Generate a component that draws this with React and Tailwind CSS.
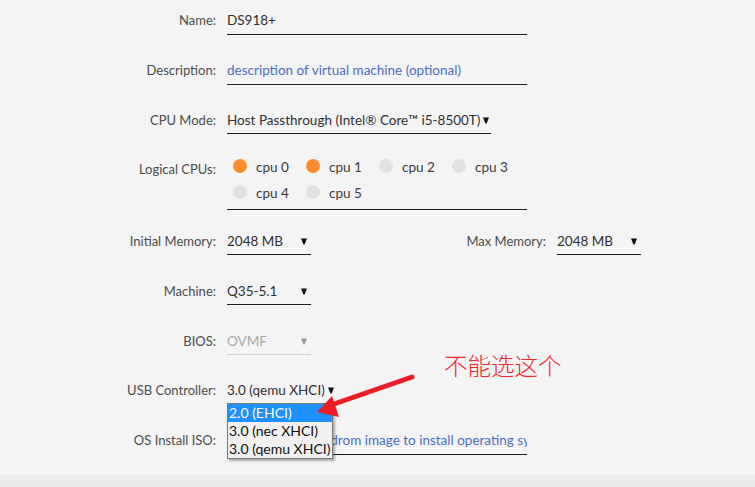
import React from 'react';

const font = { fontFamily: 'Lato, "Noto Sans", sans-serif' };

const Caret = ({ light }) => (
  <svg width="6" height="7" viewBox="0 0 6 7" className="shrink-0">
    <path d="M0 0.5 H6 L3.6 6.5 H2.4 Z" fill={light ? '#9a9a9a' : '#111'} />
  </svg>
);

const Label = ({ children, className = '' }) => (
  <div className={`w-[216px] shrink-0 text-right text-[13px] leading-[18px] text-[#4c4c4c] ${className}`}>
    {children}
  </div>
);

const TextField = ({ value, placeholder }) => (
  <div className="ml-[11px] w-[300px] overflow-hidden whitespace-nowrap border-b border-[#1e1e1e] pb-[5px] leading-[18px]">
    {value ? (
      <span className="text-[#303030]">{value}</span>
    ) : (
      <span className="text-[#4a6fc0]">{placeholder}</span>
    )}
  </div>
);

const SelectField = ({ value, width, light, auto }) => (
  <div
    className={`ml-[11px] flex items-center border-b pb-[4px] leading-[18px] ${
      light ? 'border-[#cfcfcf] text-[#a8a8a8]' : 'border-[#1e1e1e] text-[#303030]'
    } ${auto ? 'gap-[3px] pr-[2px]' : 'justify-between pr-[4px]'}`}
    style={width ? { width } : undefined}
  >
    <span className="whitespace-nowrap">{value}</span>
    <Caret light={light} />
  </div>
);

const cpus = [
  { name: 'cpu 0', on: true },
  { name: 'cpu 1', on: true },
  { name: 'cpu 2', on: false },
  { name: 'cpu 3', on: false },
  { name: 'cpu 4', on: false },
  { name: 'cpu 5', on: false },
];

export default function App() {
  return (
    <div className="relative w-[755px] h-[487px] overflow-hidden bg-[#ebebeb] text-[13.5px]" style={font}>
      <div className="h-[475px] bg-[#f4f4f4] pt-[11px]">
        {/* Name */}
        <div className="flex items-start">
          <Label>Name:</Label>
          <TextField value="DS918+" />
        </div>

        {/* Description */}
        <div className="mt-[26px] flex items-start">
          <Label>Description:</Label>
          <TextField placeholder="description of virtual machine (optional)" />
        </div>

        {/* CPU Mode */}
        <div className="mt-[26px] flex items-start">
          <Label>CPU Mode:</Label>
          <SelectField value="Host Passthrough (Intel® Core™ i5-8500T)" auto />
        </div>

        {/* Logical CPUs */}
        <div className="mt-[19px] flex items-start">
          <Label className="mt-[7px]">Logical CPUs:</Label>
          <div className="ml-[11px] w-[300px] border-b border-[#1e1e1e] pb-[4px]">
            <div className="grid grid-cols-[73px_73px_73px_73px]">
              {cpus.map((c) => (
                <div key={c.name} className="flex h-[26px] items-center pl-[6px]">
                  <span
                    className={`h-[14px] w-[14px] rounded-full ${c.on ? 'bg-[#fe8b2d]' : 'bg-[#e2e2e2]'}`}
                  />
                  <span className="ml-[9px] mt-[1px] leading-[18px] text-[#3a3a3a]">{c.name}</span>
                </div>
              ))}
            </div>
          </div>
        </div>

        {/* Memory */}
        <div className="mt-[22px] flex items-start">
          <Label>Initial Memory:</Label>
          <SelectField value="2048 MB" width="84px" />
          <div className="ml-auto mr-[114px] flex items-start">
            <div className="text-right text-[13px] leading-[18px] text-[#4c4c4c]">Max Memory:</div>
            <SelectField value="2048 MB" width="84px" />
          </div>
        </div>

        {/* Machine */}
        <div className="mt-[27px] flex items-start">
          <Label>Machine:</Label>
          <SelectField value="Q35-5.1" width="84px" />
        </div>

        {/* BIOS */}
        <div className="mt-[27px] flex items-start">
          <Label>BIOS:</Label>
          <SelectField value="OVMF" width="84px" light />
        </div>

        {/* USB Controller */}
        <div className="mt-[26px] flex items-start">
          <Label>USB Controller:</Label>
          <SelectField value="3.0 (qemu XHCI)" auto />
        </div>

        {/* OS Install ISO */}
        <div className="mt-[27px] flex items-start">
          <Label>OS Install ISO:</Label>
          <TextField placeholder="Click and Select cdrom image to install operating system" />
        </div>
      </div>

      {/* Open dropdown list */}
      <div className="absolute left-[227px] top-[403px] w-[106px] border border-[#7a7a7a] bg-[#f0f0f0] text-[14px] leading-[18px] text-[#111] shadow-[2px_2px_2px_rgba(0,0,0,0.3)]">
        <div className="bg-[#1e90ff] pl-[1px] text-white">2.0 (EHCI)</div>
        <div className="pl-[1px]">3.0 (nec XHCI)</div>
        <div className="pl-[1px]">3.0 (qemu XHCI)</div>
      </div>

      {/* Annotation */}
      <div
        className="absolute left-[444px] top-[350px] whitespace-nowrap text-[23.5px] leading-[30px] text-[#f0262d]"
        style={{ fontFamily: '"Noto Sans CJK SC", sans-serif', fontWeight: 300 }}
      >
        不能选这个
      </div>
      <svg className="pointer-events-none absolute left-0 top-0" width="755" height="487">
        <line x1="412" y1="377" x2="334" y2="404" stroke="#ec1d27" strokeWidth="5" strokeLinecap="round" />
        <polygon points="317,412 332,396 339,417" fill="#ec1d27" />
      </svg>
    </div>
  );
}
